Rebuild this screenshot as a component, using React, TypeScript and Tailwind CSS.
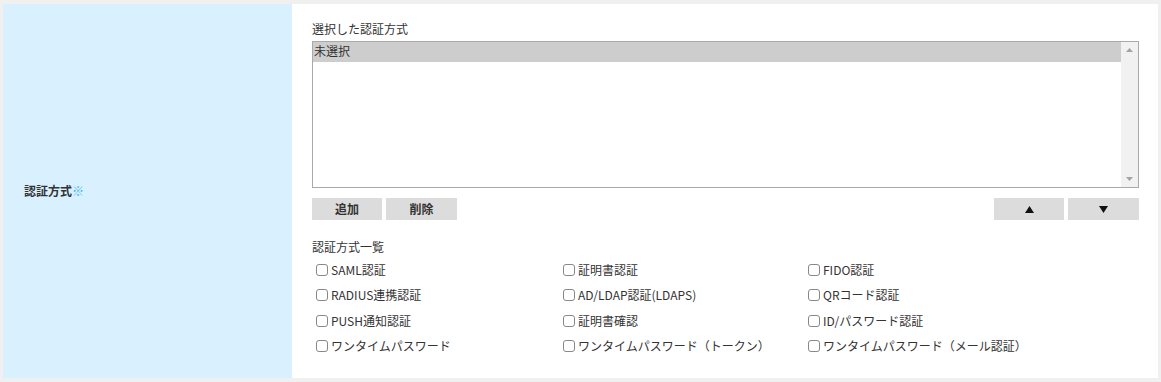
const methods = [
  'SAML認証',
  '証明書認証',
  'FIDO認証',
  'RADIUS連携認証',
  'AD/LDAP認証(LDAPS)',
  'QRコード認証',
  'PUSH通知認証',
  '証明書確認',
  'ID/パスワード認証',
  'ワンタイムパスワード',
  'ワンタイムパスワード（トークン）',
  'ワンタイムパスワード（メール認証）',
];

const font = { fontFamily: '"Noto Sans CJK JP", "Noto Sans", sans-serif' };

export default function App() {
  return (
    <div
      className="w-[1161px] h-[382px] bg-[#f0f0f0] pl-[3px] pt-[4px] pr-[3px] pb-[4px] text-[12px] text-[#333]"
      style={font}
    >
      <div className="flex h-full">
        {/* label column */}
        <div className="w-[289px] bg-[#d9f0fe] flex items-center pl-[21px]">
          <span className="font-bold text-[#333]">
            認証方式<span className="text-[#3fb4f0]">※</span>
          </span>
        </div>

        {/* field column */}
        <div className="flex-1 bg-white pl-[20px] pr-[19px] pt-[16px]">
          <div className="leading-[17px]">選択した認証方式</div>
          <div className="mt-[4px] flex h-[147px] border border-[#a9a9a9]">
            <div className="flex-1">
              <div className="h-[20px] bg-[#cdcdcd] leading-[18px] pl-[1px]">未選択</div>
            </div>
            <div className="w-[17px] bg-[#f1f1f1] flex flex-col justify-between items-center py-[6px]">
              <svg width="7" height="4" viewBox="0 0 7 4">
                <path d="M3.5 0 L7 4 L0 4 Z" fill="#a3a3a3" />
              </svg>
              <svg width="7" height="4" viewBox="0 0 7 4">
                <path d="M0 0 L7 0 L3.5 4 Z" fill="#a3a3a3" />
              </svg>
            </div>
          </div>

          <div className="mt-[10px] flex justify-between">
            <div className="flex gap-[4px]">
              <button className="w-[70px] h-[22px] bg-[#dcdcdc] font-bold">追加</button>
              <button className="w-[71px] h-[22px] bg-[#dcdcdc] font-bold">削除</button>
            </div>
            <div className="flex gap-[4px]">
              <button className="w-[70px] h-[22px] bg-[#dcdcdc] flex items-center justify-center">
                <svg width="9" height="7" viewBox="0 0 9 7">
                  <path d="M4.5 0 L9 7 L0 7 Z" fill="#111" />
                </svg>
              </button>
              <button className="w-[71px] h-[22px] bg-[#dcdcdc] flex items-center justify-center">
                <svg width="9" height="7" viewBox="0 0 9 7">
                  <path d="M0 0 L9 0 L4.5 7 Z" fill="#111" />
                </svg>
              </button>
            </div>
          </div>

          <div className="mt-[18px] leading-[17px]">認証方式一覧</div>
          <div className="grid grid-cols-[247px_245px_1fr] pl-[4px] mt-[2px]">
            {methods.map((m) => (
              <label key={m} className="flex items-center h-[25.5px] gap-[3px]">
                <span className="w-[12px] h-[12px] border border-[#888] rounded-[3px] bg-white" />
                <span>{m}</span>
              </label>
            ))}
          </div>
        </div>
      </div>
    </div>
  );
}
